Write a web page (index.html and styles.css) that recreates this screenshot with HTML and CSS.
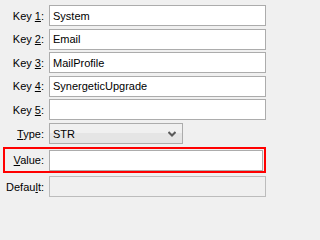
FILE: index.html
```html
<!DOCTYPE html>
<html>
<head>
<meta charset="utf-8">
<link rel="stylesheet" href="styles.css">
</head>
<body>
<div class="form">
  <div class="keys">
    <div class="row"><label class="lbl">Key <u>1</u>:</label><div class="field">System</div></div>
    <div class="row"><label class="lbl">Key <u>2</u>:</label><div class="field">Email</div></div>
    <div class="row"><label class="lbl">Key <u>3</u>:</label><div class="field">MailProfile</div></div>
    <div class="row"><label class="lbl">Key <u>4</u>:</label><div class="field">SynergeticUpgrade</div></div>
    <div class="row"><label class="lbl">Key <u>5</u>:</label><div class="field"></div></div>
  </div>
  <div class="row"><label class="lbl"><u>T</u>ype:</label>
    <div class="select"><span>STR</span>
      <svg class="chev" width="8" height="6" viewBox="0 0 8 6"><path d="M0.5 1 L4 4.5 L7.5 1" fill="none" stroke="#5a5a5a" stroke-width="2"/></svg>
    </div>
  </div>
  <div class="row highlight"><label class="lbl lbl-in"><u>V</u>alue:</label><div class="field field-in"></div></div>
  <div class="row"><label class="lbl">Defau<u>l</u>t:</label><div class="field disabled"></div></div>
</div>
</body>
</html>
```
FILE: styles.css
```css
html, body {
  margin: 0;
  padding: 0;
  background: #f0f0f0;
}
body {
  width: 266px;
  height: 202px;
  overflow: hidden;
  font-family: "Liberation Sans", Arial, sans-serif;
  font-size: 11px;
  color: #000;
}
.form {
  display: flex;
  flex-direction: column;
  gap: 3px;
  padding-top: 5px;
}
.keys {
  display: flex;
  flex-direction: column;
  gap: 2.5px;
}
.row {
  display: flex;
  align-items: center;
}
.lbl {
  width: 44px;
  text-align: right;
  margin-right: 5px;
  flex: none;
  white-space: nowrap;
}
.field {
  box-sizing: border-box;
  width: 217px;
  height: 21px;
  border: 1px solid #acacac;
  background: #fff;
  padding-left: 3px;
  display: flex;
  align-items: center;
}
.select {
  box-sizing: border-box;
  width: 134px;
  height: 21px;
  border: 1px solid #acacac;
  background: linear-gradient(#f0f0f0 0, #f0f0f0 50%, #e5e5e5 50%, #e5e5e5 100%);
  padding-left: 3px;
  padding-right: 6px;
  display: flex;
  align-items: center;
  justify-content: space-between;
}
.chev {
  display: block;
}
.highlight {
  box-sizing: border-box;
  width: 263px;
  height: 26px;
  margin-left: 3px;
  border: 2px solid #ff0000;
  padding: 1px 1px 0 0;
  align-items: flex-start;
}
.lbl-in {
  width: 39px;
  height: 21px;
  line-height: 21px;
}
.field-in {
  width: 214px;
}
.disabled {
  background: #f0f0f0;
  border-color: #bcbcbc;
}
```
